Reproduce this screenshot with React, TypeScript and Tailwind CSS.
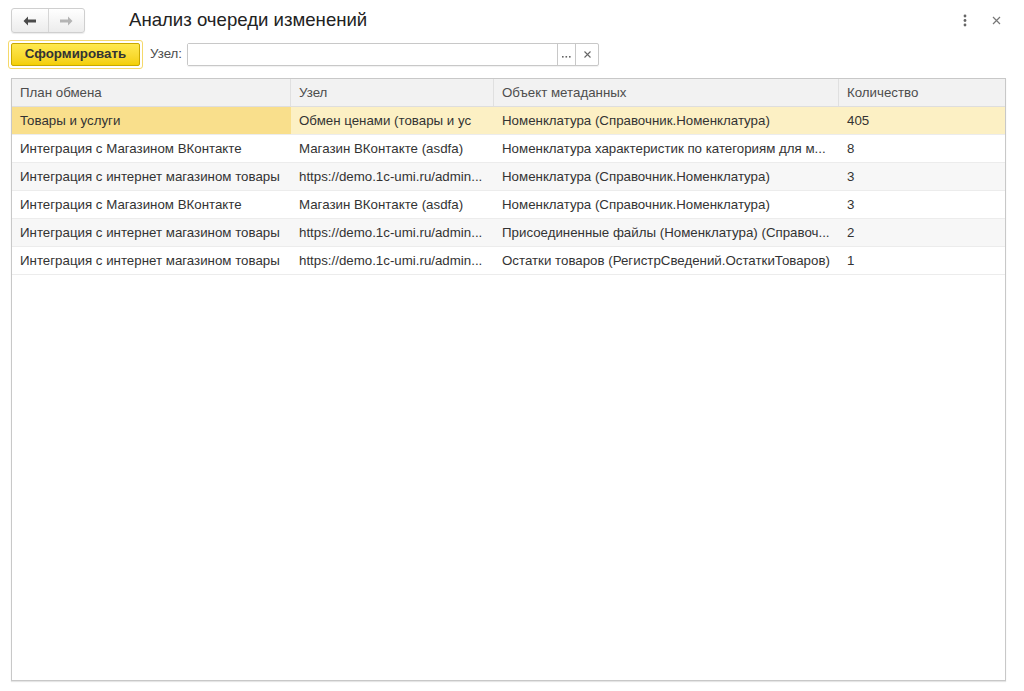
const rows = [
  ["Товары и услуги", "Обмен ценами (товары и ус", "Номенклатура (Справочник.Номенклатура)", "405"],
  ["Интеграция с Магазином ВКонтакте", "Магазин ВКонтакте (asdfa)", "Номенклатура характеристик по категориям для м...", "8"],
  ["Интеграция с интернет магазином товары", "https://demo.1c-umi.ru/admin...", "Номенклатура (Справочник.Номенклатура)", "3"],
  ["Интеграция с Магазином ВКонтакте", "Магазин ВКонтакте (asdfa)", "Номенклатура (Справочник.Номенклатура)", "3"],
  ["Интеграция с интернет магазином товары", "https://demo.1c-umi.ru/admin...", "Присоединенные файлы (Номенклатура) (Справоч...", "2"],
  ["Интеграция с интернет магазином товары", "https://demo.1c-umi.ru/admin...", "Остатки товаров (РегистрСведений.ОстаткиТоваров)", "1"],
];

const cols = ["w-[279px]", "w-[203px]", "w-[345px]", "flex-1"];

export default function App() {
  return (
    <div className="h-[691px] w-[1024px] bg-white font-['Liberation_Sans',Arial,sans-serif] text-[13.3px] text-[#333] flex flex-col overflow-hidden">
      {/* title bar */}
      <div className="flex items-center h-[25px] mt-[8px] pl-[11px] pr-[23px]">
        <div className="flex h-[25px] w-[74px] rounded-[3px] border border-[#cfcfcf] bg-gradient-to-b from-white to-[#ececec] shadow-[0_1px_1px_rgba(0,0,0,0.08)]">
          <button className="flex-1 flex items-center justify-center border-r border-[#d6d6d6]">
            <svg width="14" height="10" viewBox="0 0 14 10">
              <path d="M5 0.5 L0.5 5 L5 9.5 L5 6.5 L13 6.5 L13 3.5 L5 3.5 Z" fill="#4a4a4a" />
            </svg>
          </button>
          <button className="flex-1 flex items-center justify-center">
            <svg width="14" height="10" viewBox="0 0 14 10">
              <path d="M9 0.5 L13.5 5 L9 9.5 L9 6.5 L1 6.5 L1 3.5 L9 3.5 Z" fill="#b4b4b4" />
            </svg>
          </button>
        </div>
        <div className="ml-[44px] text-[18.6px] text-[#222] leading-none">Анализ очереди изменений</div>
        <div className="ml-auto flex items-center gap-[25px]">
          <svg width="4" height="13" viewBox="0 0 4 13">
            <circle cx="2" cy="2" r="1.4" fill="#666" />
            <circle cx="2" cy="6.5" r="1.4" fill="#666" />
            <circle cx="2" cy="11" r="1.4" fill="#666" />
          </svg>
          <svg width="9" height="9" viewBox="0 0 9 9">
            <path d="M1 1 L8 8 M8 1 L1 8" stroke="#777" strokeWidth="1.2" />
          </svg>
        </div>
      </div>

      {/* command bar */}
      <div className="flex items-center mt-[6px] pl-[8px] h-[30px]">
        <div className="rounded-[3px] border border-[#f5d96a] p-[2px]">
          <button className="h-[23px] w-[129px] rounded-[2px] border border-[#c9a800] bg-gradient-to-b from-[#ffe94f] to-[#f4cf00] font-bold text-[13.3px] text-[#333]">
            Сформировать
          </button>
        </div>
        <span className="ml-[7px] text-[#4d4d4d]">Узел:</span>
        <div className="ml-[5px] flex h-[23px] rounded-[2px] border border-[#c8c8c8] shadow-[0_1px_1px_rgba(0,0,0,0.06)]">
          <div className="w-[369px] bg-white" />
          <div className="w-[18px] border-l border-[#c8c8c8] flex items-end justify-center pb-[7px]">
            <svg width="9" height="2" viewBox="0 0 9 2">
              <rect x="0" y="0" width="1.6" height="1.6" fill="#666" />
              <rect x="3.5" y="0" width="1.6" height="1.6" fill="#666" />
              <rect x="7" y="0" width="1.6" height="1.6" fill="#666" />
            </svg>
          </div>
          <div className="w-[23px] border-l border-[#c8c8c8] flex items-center justify-center">
            <svg width="7" height="7" viewBox="0 0 7 7">
              <path d="M0.5 0.5 L6.5 6.5 M6.5 0.5 L0.5 6.5" stroke="#666" strokeWidth="1.1" />
            </svg>
          </div>
        </div>
      </div>

      {/* table */}
      <div className="mt-[9px] ml-[11px] w-[995px] h-[603px] border border-[#c8c8c8] shadow-[0_1px_1px_rgba(0,0,0,0.1)] flex flex-col">
        <div className="flex h-[28px] bg-[#f2f2f2] border-b border-[#dedede] text-[#4d4d4d]">
          {["План обмена", "Узел", "Объект метаданных", "Количество"].map((h, i) => (
            <div key={h} className={`${cols[i]} flex items-center px-[8px] ${i < 3 ? "border-r border-[#e0e0e0]" : ""}`}>
              {h}
            </div>
          ))}
        </div>
        {rows.map((r, ri) => (
          <div
            key={ri}
            className={`flex h-[28px] border-b border-[#ececec] ${
              ri === 0 ? "bg-[#fcf0c4]" : ri % 2 === 0 ? "bg-[#f7f7f7]" : "bg-white"
            }`}
          >
            {r.map((c, ci) => (
              <div
                key={ci}
                className={`${cols[ci]} flex items-center px-[8px] whitespace-nowrap overflow-hidden ${
                  ri === 0 && ci === 0 ? "bg-[#f9df8c]" : ""
                }`}
              >
                {c}
              </div>
            ))}
          </div>
        ))}
      </div>
    </div>
  );
}
